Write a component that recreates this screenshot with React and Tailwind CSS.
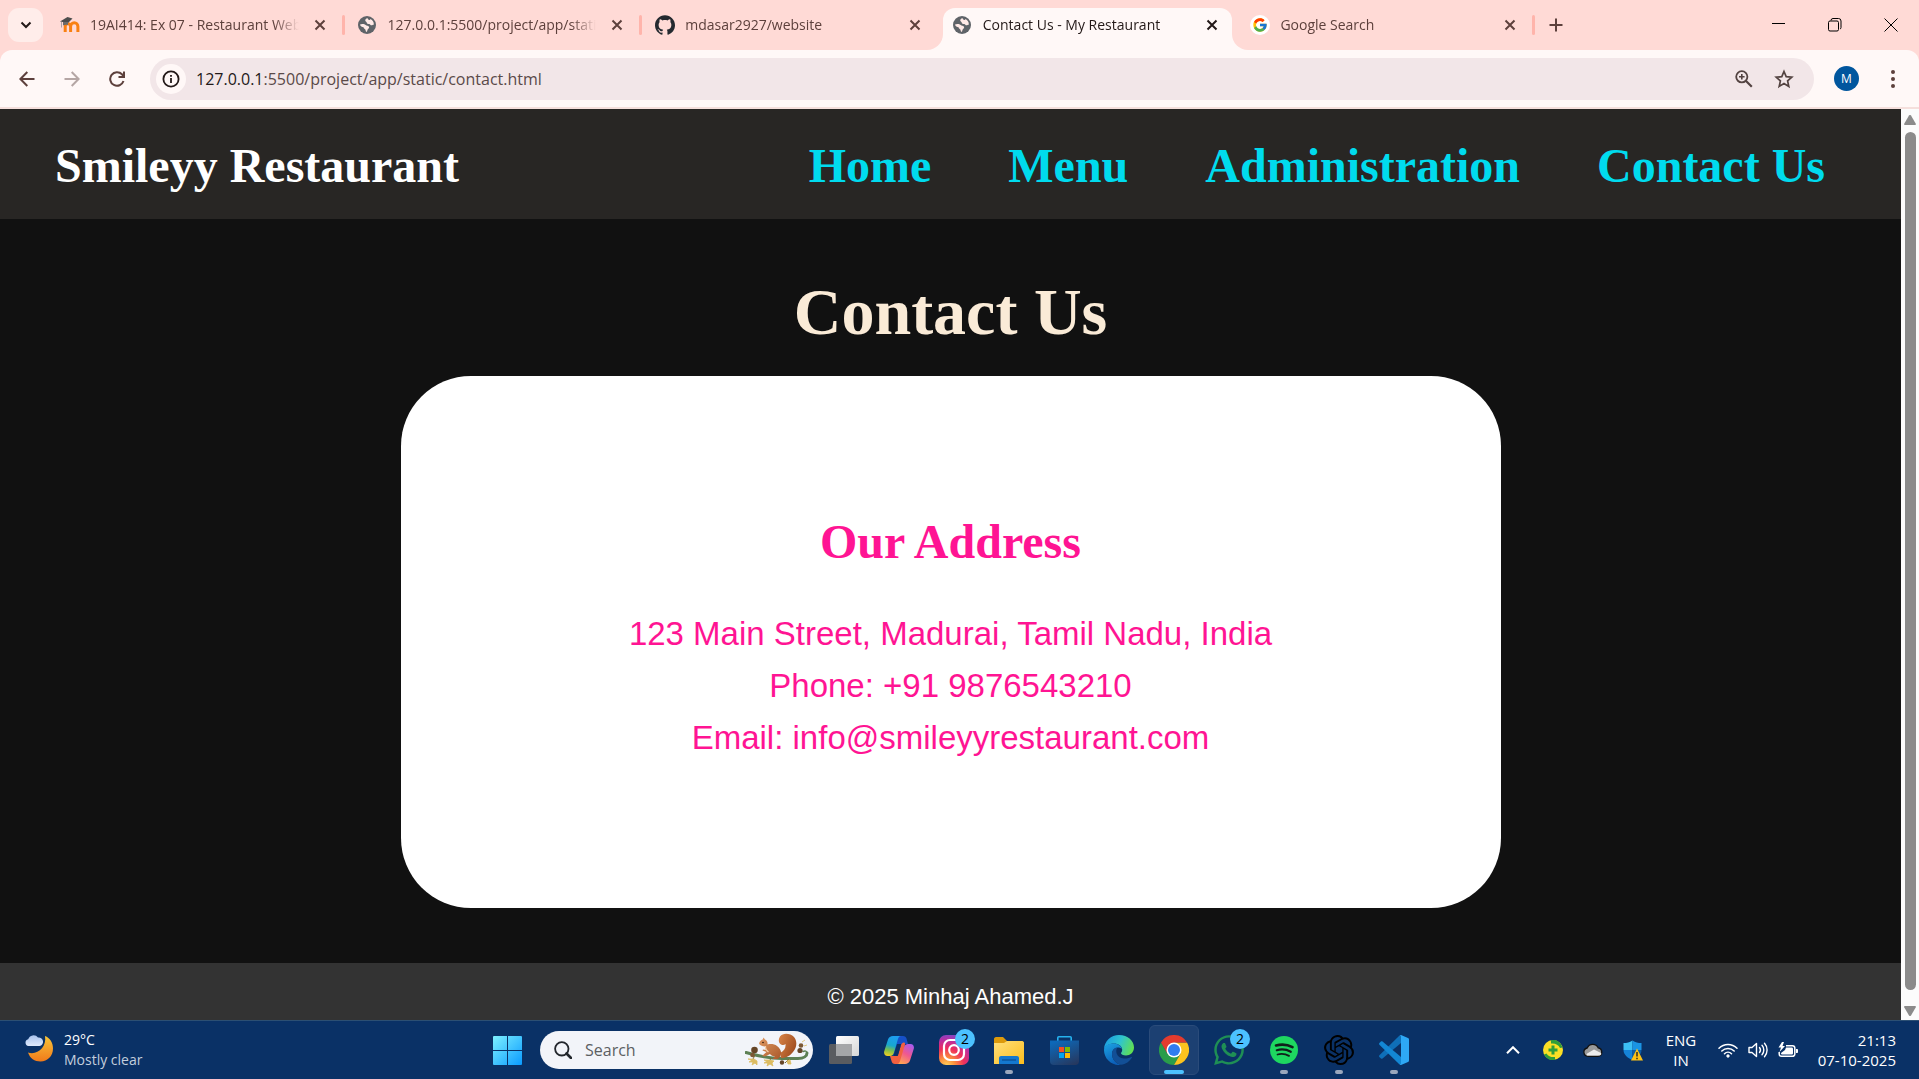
import { FcGoogle } from 'react-icons/fc';
import { SiGithub, SiOpenai } from 'react-icons/si';
import { FaWhatsapp } from 'react-icons/fa';

const CloseIcon = () => (
  <svg viewBox="0 0 12 12" className="size-3 fill-none stroke-current stroke-2">
    <path d="M1.5 1.5l9 9M10.5 1.5l-9 9" />
  </svg>
);

const GlobeIcon = () => (
  <svg viewBox="0 0 18 18" className="size-[18px]">
    <circle cx="9" cy="9" r="9" fill="#5f6368" />
    <path
      d="M9.500 2.200C7.800 2.500 7 3.500 7.300 4.700c.2 1 1.500 1 1.500 2 0 1.200 1.400 1 2.400 1.300 1 .3 1.300 1.300 2.300 1.300.9 0 1.300-.7 2.300-.6.300-2.600-1.300-4.700-3.300-5.700-.2.900-1 1.200-1.600.9-.5-.3-.7-1.200-1.400-1.700zM2 8.500c.9-.6 2.400-.7 3.700-.4 1.800.4 2.300 1.500 3.600 1.700 1.300.2 2 .9 1.800 2-.2 1-1.300 1.200-1.600 2.100-.3.900-.3 1.500-1 2-1-.2-.6-1.600-1.200-2.400-.6-.8-1.800-.9-1.700-2.200C4 11.200 2.400 10.500 2 8.500z"
      fill="#ffe9e6"
    />
  </svg>
);

const MoodleIcon = () => (
  <svg viewBox="0 0 20 18" className="h-[18px] w-5">
    <path
      d="M5.200 16V10.500a2.700 2.700 0 0 1 5.400 0V16m0-5.500a2.900 2.900 0 0 1 7.300 0V16"
      fill="none"
      stroke="#f98012"
      strokeWidth="3"
    />
    <path d="M0 5.500L7.500 1l5 1.500L8 7z" fill="#4d4d4d" />
    <path d="M3 6v3.500c1.500-1 3.500-1 5-.5V6z" fill="#6b6b6b" />
    <path d="M1.500 5.500v6" stroke="#8b8b8b" strokeWidth=".7" />
  </svg>
);

const GoogleIcon = () => (
  <span className="flex size-5 items-center justify-center rounded-full bg-white">
    <FcGoogle className="size-4" />
  </span>
);

const tabs = [
  { title: '19AI414: Ex 07 - Restaurant Website', icon: <MoodleIcon />, divider: true },
  { title: '127.0.0.1:5500/project/app/static/', icon: <GlobeIcon />, divider: true },
  { title: 'mdasar2927/website', icon: <SiGithub className="size-5 text-[#24292f]" /> },
  { title: 'Contact Us - My Restaurant', icon: <GlobeIcon />, active: true },
  { title: 'Google Search', icon: <GoogleIcon />, divider: true },
];

function Tab({ title, icon, active, divider }) {
  return (
    <div
      className={`relative flex h-full min-w-0 flex-1 items-center pr-3.5 pl-3.5 ${
        active ? 'text-[#231918]' : 'text-[#5d403c]'
      }`}
    >
      {active && (
        <>
          <span className="absolute inset-x-1 top-2 bottom-0 rounded-t-xl bg-[#fff8f7]" />
          <span className="absolute bottom-0 -left-3 size-4 overflow-hidden bg-[#fff8f7]">
            <span className="block size-full rounded-br-2xl bg-[#ffdad6]" />
          </span>
          <span className="absolute -right-3 bottom-0 size-4 overflow-hidden bg-[#fff8f7]">
            <span className="block size-full rounded-bl-2xl bg-[#ffdad6]" />
          </span>
        </>
      )}
      <button className="relative flex min-w-0 flex-1 items-center gap-2.5 text-left text-sm">
        <span className="flex w-5 shrink-0 items-center">{icon}</span>
        <span className="flex-1 overflow-hidden whitespace-nowrap [mask-image:linear-gradient(to_right,black_88%,transparent)]">
          {title}
        </span>
      </button>
      <button aria-label={`Close ${title}`} className="relative ml-[11px] flex size-5 items-center justify-center">
        <CloseIcon />
      </button>
      {divider && <span className="absolute -right-px h-5 w-[3px] rounded-full bg-[#ffb4ab]" />}
    </div>
  );
}

function TabStrip() {
  return (
    <div className="flex h-[50px] shrink-0 items-center bg-[#ffdad6] pl-2">
      <button
        aria-label="Search tabs"
        className="mr-[3px] flex h-[34px] w-[35px] items-center justify-center rounded-[11px] bg-[#ffedea] text-[#231918]"
      >
        <svg viewBox="0 0 12 8" className="h-2 w-3 fill-none stroke-current stroke-2">
          <path d="M1.500 1.500L6 6l4.500-4.500" />
        </svg>
      </button>
      <div className="flex h-full flex-1">
        {tabs.map((tab) => (
          <Tab key={tab.title} {...tab} />
        ))}
      </div>
      <div className="flex h-full w-[385px] items-center">
        <button aria-label="New tab" className="ml-2 flex size-7 items-center justify-center text-[#5d403c]">
          <svg viewBox="0 0 14 14" className="size-3.5 fill-none stroke-current stroke-2">
            <path d="M7 .5v13M.5 7h13" />
          </svg>
        </button>
        <div className="ml-auto flex h-full text-black">
          <button aria-label="Minimize" className="flex w-14 items-center justify-center">
            <svg viewBox="0 0 14 14" className="size-3.5 fill-none stroke-current">
              <path d="M0 5.500h13" />
            </svg>
          </button>
          <button aria-label="Restore" className="flex w-14 items-center justify-center">
            <svg viewBox="0 0 14 14" className="size-3.5 fill-none stroke-current">
              <rect x=".5" y="3" width="10" height="10" rx="1.500" />
              <path d="M3 2.500A2 2 0 0 1 5 .5h5.500A2.500 2.500 0 0 1 13 3v6.500a1.500 1.500 0 0 1-1 1.500" />
            </svg>
          </button>
          <button aria-label="Close window" className="flex w-14 items-center justify-center">
            <svg viewBox="0 0 14 14" className="size-3.5 fill-none stroke-current">
              <path d="M.5.5l13 13M13.500.5l-13 13" />
            </svg>
          </button>
        </div>
      </div>
    </div>
  );
}

function Toolbar() {
  return (
    <div className="shrink-0 bg-[#ffdad6]">
      <div className="flex h-[59px] items-center rounded-t-xl border-b-2 border-[#f5dfdc] bg-[#fff8f7] pl-[9px] text-[#534341]">
        <div className="flex gap-[9px]">
          <button aria-label="Back" className="flex size-9 items-center justify-center">
            <svg viewBox="0 0 16 16" className="size-4 fill-none stroke-[#5d403c] stroke-2">
              <path d="M15.500 8H1.500M8.300 1L1.400 8l6.900 7" />
            </svg>
          </button>
          <button aria-label="Forward" className="flex size-9 items-center justify-center">
            <svg viewBox="0 0 16 16" className="size-4 fill-none stroke-[#b5a6a4] stroke-2">
              <path d="M.5 8h14M7.700 1l6.900 7-6.900 7" />
            </svg>
          </button>
          <button aria-label="Reload" className="flex size-9 items-center justify-center">
            <svg viewBox="0 0 16 16" className="size-4 fill-none stroke-[#5d403c] stroke-2">
              <path d="M14.500 10A6.800 6.800 0 1 1 13 3.300L14.800 5.500M15 .5V6H9.500" />
            </svg>
          </button>
        </div>
        <div className="ml-[15px] flex h-[42px] flex-1 items-center rounded-full bg-[#f2e6e8] pr-5 pl-1.5">
          <button
            aria-label="View site information"
            className="flex size-[30px] items-center justify-center rounded-full bg-[#fff8f7]"
          >
            <svg viewBox="0 0 18 18" className="size-[18px] fill-none stroke-[#231918]">
              <circle cx="9" cy="9" r="7.600" strokeWidth="1.800" />
              <path d="M9 8v5M9 5v1.800" strokeWidth="1.800" />
            </svg>
          </button>
          <a href="#contact" className="ml-2.5 flex-1 text-base text-[#5a4a49]">
            <span className="text-[#231918]">127.0.0.1</span>:5500/project/app/static/contact.html
          </a>
          <button aria-label="Zoom" className="flex size-5 items-center justify-center">
            <svg viewBox="0 0 18 18" className="size-[18px] fill-none stroke-current">
              <circle cx="6.800" cy="6.800" r="5.600" strokeWidth="1.800" />
              <path d="M10.800 10.800l6 6" strokeWidth="2.200" />
              <path d="M6.800 4v5.600M4 6.800h5.600" strokeWidth="1.600" />
            </svg>
          </button>
          <button aria-label="Bookmark this tab" className="ml-5 flex size-5 items-center justify-center">
            <svg viewBox="0 0 20 20" className="size-5 fill-none stroke-current">
              <path
                d="M10 2.500l2.200 5.200 5.600.5-4.200 3.700 1.200 5.500L10 14.500l-4.800 2.900 1.200-5.500L2.200 8.200l5.600-.5z"
                strokeWidth="1.700"
              />
            </svg>
          </button>
        </div>
        <button
          aria-label="Profile"
          className="ml-5 flex size-[25px] items-center justify-center rounded-full bg-[#00569e] text-xs text-white"
        >
          M
        </button>
        <button aria-label="Menu" className="mr-3 ml-5 flex w-7 items-center justify-center">
          <svg viewBox="0 0 4 18" className="h-[18px] w-1 fill-[#5d403c]">
            <circle cx="2" cy="2" r="2" />
            <circle cx="2" cy="9" r="2" />
            <circle cx="2" cy="16" r="2" />
          </svg>
        </button>
      </div>
    </div>
  );
}

const links = ['Home', 'Menu', 'Administration', 'Contact Us'];

function RestaurantPage() {
  return (
    <div className="flex-1 bg-[#111111] font-['Liberation_Sans',Arial,sans-serif]">
      <header className="flex h-[110px] items-center justify-between bg-[#282624] pt-1 pr-[76px] pl-[55px] font-['Liberation_Serif','Times_New_Roman',serif] text-5xl font-bold">
        <p className="text-white">Smileyy Restaurant</p>
        <nav className="flex gap-[77px] text-[#00dbee]">
          {links.map((link) => (
            <a key={link} href="#contact">
              {link}
            </a>
          ))}
        </nav>
      </header>
      <main id="contact" className="flex flex-col items-center pt-[55px] pb-[55px]">
        <h1 className="font-['Liberation_Serif','Times_New_Roman',serif] text-[66px] leading-[76px] font-bold text-[#faebd7]">
          Contact Us
        </h1>
        <section className="mt-[26px] w-full max-w-[1100px] rounded-[70px] bg-white pt-[138px] pb-36 text-center text-[#ff1493]">
          <h2 className="font-['Liberation_Serif','Times_New_Roman',serif] text-5xl leading-14 font-bold">
            Our Address
          </h2>
          <address className="mt-[38px] text-[33px] leading-[52px] not-italic">
            <p>123 Main Street, Madurai, Tamil Nadu, India</p>
            <p>Phone: +91 9876543210</p>
            <p>Email: info@smileyyrestaurant.com</p>
          </address>
        </section>
      </main>
      <footer className="bg-[#333333] pt-5 pb-8 text-center text-[22px] leading-7 text-white">
        © 2025 Minhaj Ahamed.J
      </footer>
    </div>
  );
}

function Scrollbar() {
  return (
    <div className="flex w-[18px] flex-col items-center bg-[#fcfcfc]">
      <svg viewBox="0 0 12 10" className="mt-1.5 h-2.5 w-3 fill-[#8b8b8b]">
        <path d="M5 .6a1.200 1.200 0 0 1 2 0l4.800 8.200c.3.600 0 1.200-.7 1.200H.9c-.7 0-1-.6-.7-1.200z" />
      </svg>
      <div className="mt-[7px] w-[11px] flex-1 rounded-full bg-[#8b8b8b]" />
      <svg viewBox="0 0 12 10" className="mt-4 mb-1 h-2.5 w-3 fill-[#8b8b8b]">
        <path d="M5 9.400a1.200 1.200 0 0 0 2 0l4.800-8.200c.3-.6 0-1.200-.7-1.200H.9C.2 0-.1.600.2 1.200z" />
      </svg>
    </div>
  );
}

const WindowsIcon = () => (
  <svg viewBox="0 0 29 29" className="size-[29px]">
    <defs>
      <linearGradient id="win" x1="0" y1="0" x2="1" y2="1" gradientUnits="objectBoundingBox">
        <stop offset="0" stopColor="#7df0ff" />
        <stop offset="1" stopColor="#0a9bff" />
      </linearGradient>
    </defs>
    <path
      d="M1 0h13v14H0V1a1 1 0 0 1 1-1zM15 0h13a1 1 0 0 1 1 1v13H15zM0 15h14v14H1a1 1 0 0 1-1-1zM15 15h14v13a1 1 0 0 1-1 1H15z"
      fill="url(#win)"
    />
  </svg>
);

const Squirrel = () => (
  <svg viewBox="0 0 64 34" className="h-[34px] w-16">
    <defs>
      <linearGradient id="fur" x1="0" y1="0" x2="1" y2="1">
        <stop offset="0" stopColor="#e09a62" />
        <stop offset="1" stopColor="#a9582a" />
      </linearGradient>
      <linearGradient id="tail" x1="0" y1="0" x2="1" y2=".6">
        <stop offset="0" stopColor="#d98548" />
        <stop offset="1" stopColor="#a04d1f" />
      </linearGradient>
    </defs>
    <path d="M1 19.500c12 3.500 24 6 36 6h16c6 0 9-2.500 9-5.500" fill="none" stroke="#5d8054" strokeWidth="3" strokeLinecap="round" />
    <path d="M62 20c0-2-2-2.500-4-1.500" fill="none" stroke="#5d8054" strokeWidth="1.500" strokeLinecap="round" />
    <path d="M10 22l-3 6M26 25l-3 6M44 26l-4 4" stroke="#7b6a35" strokeWidth="1" />
    <path
      d="M3 26l4 1-3 2 4 0-1 3 3-2 2 2 0-4-3-2zM19 27l3 1-3 2 4 0-1 3 3-2 3 2-1-3 2-2-5-1zM42 28l3-1 1 4-3 0zM57 9l3-2M59 13l3-1"
      fill="#dcbc62"
      stroke="#dcbc62"
      strokeWidth=".8"
    />
    <circle cx="9.500" cy="17" r="3.300" fill="#654527" />
    <circle cx="7.500" cy="22" r="2.300" fill="#7b5833" />
    <circle cx="56" cy="12.500" r="2.300" fill="#7b5833" />
    <circle cx="55" cy="17.500" r="2.600" fill="#654527" />
    <circle cx="37" cy="29.500" r="2.200" fill="#654527" />
    <path
      d="M36 25c6 0 9-2.500 12-6 4-4.500 4.500-11 1-15C45 0 38-.5 35 3.500c-2 3-1.500 6.500 1 8 2 1 3.500.5 4.500-.5.5 4-1.500 7-5.500 9z"
      fill="url(#tail)"
    />
    <path
      d="M14 10.500c.5-2 2-3.500 3.700-4L18.500 4.500l1.500 2c2 1 2.800 2.800 2.500 5 3-.8 7-.5 9.500 1.500 3.500 2.500 5 6 3.500 9.500-.5 1.500-1.500 2.500-3 3.500h-5l2.500-2.500c-2 0-4-1-5-2.500L20 23.500l-3-.5 4.500-4-4-1.500.5-1 3.500.5c-1-1-1.500-2-1.500-3.500-2.500-.2-5-.8-6-3z"
      fill="url(#fur)"
    />
    <path d="M20.500 13c-.2 2.500.8 4.500 3 6" fill="none" stroke="#f3d0aa" strokeWidth="1.200" />
    <circle cx="18" cy="9.500" r=".8" fill="#2b1608" />
  </svg>
);

const TaskViewIcon = () => (
  <svg viewBox="0 0 30 28" className="h-7 w-[30px]">
    <defs>
      <linearGradient id="tv" x1="0" y1="0" x2="1" y2="1">
        <stop offset="0" stopColor="#fff" />
        <stop offset="1" stopColor="#d6d6d6" />
      </linearGradient>
    </defs>
    <rect y="8" width="23" height="20" rx="1.500" fill="#5a5c60" />
    <rect x="7" width="23" height="20" rx="1.500" fill="url(#tv)" />
    <path d="M7 8h16v12H7z" fill="#a5a6a8" />
  </svg>
);

const CopilotIcon = () => (
  <svg viewBox="0 0 30 28" className="h-7 w-[30px]">
    <defs>
      <linearGradient id="cpA" x1=".4" y1="0" x2=".2" y2="1">
        <stop offset="0" stopColor="#1d9df0" />
        <stop offset=".45" stopColor="#18a7cf" />
        <stop offset=".7" stopColor="#7cbf4b" />
        <stop offset="1" stopColor="#f4d020" />
      </linearGradient>
      <linearGradient id="cpB" x1=".8" y1="0" x2=".3" y2="1">
        <stop offset="0" stopColor="#a85bf0" />
        <stop offset=".5" stopColor="#f0588f" />
        <stop offset="1" stopColor="#ffa454" />
      </linearGradient>
    </defs>
    <path d="M10 0h9c2 0 3 1 3.500 2.500L24 8h-4c-2 0-3 1-4 4l-3 11c-1 3-2 4-4 3z" fill="#1650c8" />
    <path d="M20 28h-9c-2 0-3-1-3.500-3L6 20h5c2 0 3-1 3.700-3.500L17 9c1-2 2-3 4-2z" fill="#f2603f" />
    <path d="M9 0h8c-1.500 0-2.500 1-3.200 3.500L10 16.500C9.300 19 8 20 6 20H3.500C.7 20-.5 17.500.3 15L4 3.500C4.800 1.200 6.500 0 9 0z" fill="url(#cpA)" />
    <path d="M21 28h-8c1.500 0 2.500-1 3.200-3.500L20 11.500C20.700 9 22 8 24 8h2.500c2.800 0 4 2.500 3.200 5L26 24.500C25.200 26.800 23.500 28 21 28z" fill="url(#cpB)" />
    <path d="M13 8h4.200L14 19.500c-.3.500-.6.500-1 .5H9.300z" fill="#0a3166" />
  </svg>
);

const InstagramIcon = () => (
  <svg viewBox="0 0 30 30" className="size-[30px]">
    <defs>
      <radialGradient id="ig" cx=".25" cy="1.050" r="1.200">
        <stop offset="0" stopColor="#ffd95e" />
        <stop offset=".25" stopColor="#fb8d3c" />
        <stop offset=".5" stopColor="#ee2f5b" />
        <stop offset=".75" stopColor="#b72fa5" />
        <stop offset="1" stopColor="#5a55d6" />
      </radialGradient>
    </defs>
    <rect width="30" height="30" rx="7" fill="url(#ig)" />
    <g fill="none" stroke="#fff" strokeWidth="2.200">
      <rect x="5" y="5" width="20" height="20" rx="6" />
      <circle cx="15" cy="15" r="4.800" />
    </g>
    <circle cx="21" cy="9" r="1.300" fill="#fff" />
  </svg>
);

const FolderIcon = () => (
  <svg viewBox="0 0 30 27" className="h-[27px] w-[30px]">
    <defs>
      <linearGradient id="fold" x1="0" y1="0" x2="1" y2="1">
        <stop offset="0" stopColor="#ffe07c" />
        <stop offset="1" stopColor="#fbbd1d" />
      </linearGradient>
    </defs>
    <path d="M0 2C0 1 .8 0 2 0h7l4 4h15c1 0 2 1 2 2v8H0z" fill="#dc9a0c" />
    <path d="M0 6h10l3-2h15c1 0 2 1 2 2v21H0z" fill="url(#fold)" />
    <path d="M5 27v-6c0-1.200 1-2 2-2h16c1 0 2 .8 2 2v6z" fill="#1478cf" />
    <path d="M8 23h14" stroke="#0b559c" strokeWidth="1.500" />
  </svg>
);

const StoreIcon = () => (
  <svg viewBox="0 0 29 29" className="size-[29px]">
    <defs>
      <linearGradient id="store" x1=".3" y1="0" x2=".8" y2="1">
        <stop offset="0" stopColor="#0d68b8" />
        <stop offset="1" stopColor="#26385f" />
      </linearGradient>
    </defs>
    <path d="M7.800 6V1.800c0-.6.400-1 1-1h11.400c.6 0 1 .4 1 1V6" fill="none" stroke="#25b1ee" strokeWidth="1.600" />
    <path d="M0 4.500h29V25a4 4 0 0 1-4 4H4a4 4 0 0 1-4-4z" fill="url(#store)" />
    <path d="M9 11h5v5H9z" fill="#f25022" />
    <path d="M15 11h5v5h-5z" fill="#7fba00" />
    <path d="M9 17h5v5H9z" fill="#00a4ef" />
    <path d="M15 17h5v5h-5z" fill="#ffb900" />
  </svg>
);

const EdgeIcon = () => (
  <svg viewBox="0 0 30 30" className="size-[30px]">
    <defs>
      <linearGradient id="edgeTop" x1="0" y1=".3" x2="1" y2=".6">
        <stop offset="0" stopColor="#1b9de2" />
        <stop offset=".5" stopColor="#2fc4cf" />
        <stop offset="1" stopColor="#62e04f" />
      </linearGradient>
      <linearGradient id="edgeLeft" x1="0" y1="0" x2=".4" y2="1">
        <stop offset="0" stopColor="#1ca4e4" />
        <stop offset="1" stopColor="#0c5fb8" />
      </linearGradient>
    </defs>
    <path d="M0 14C.5 6 7 0 15 0c9 0 15 6 15 12.500 0 5-4 8-8 8-3 0-5-1-5-2.200 0-1 1.200-1.300 1.200-3.600C18.200 11 14 8.500 10 8.500 5 8.500 1 11 0 14z" fill="url(#edgeTop)" />
    <path d="M0 15c0-4 4-6.500 9.500-6.500 4.500 0 8 2.500 8.500 5.500-1-1-2.500-1.500-4-1.500-4 0-6 3-6 6.500 0 5 4 10 9 10.800C8 31 0 24 0 15z" fill="url(#edgeLeft)" />
    <path d="M8 19c0-3.500 2.300-6.300 5.500-6.500C11 15 12 23 20 23.500c3 .2 5.500-.6 7.500-1.500.4-.2.700.2.500.6C26 26 21.500 29.800 17 29.800 12 29 8 24 8 19z" fill="#124f96" />
  </svg>
);

const ChromeIcon = () => (
  <svg viewBox="0 0 30 30" className="size-[30px]">
    <path d="M2 7.500A15 15 0 0 0 15 30l6.500-11.200L15 15 8.500 18.800z" fill="#2a9d4a" />
    <path d="M28 7.500A15 15 0 0 1 15 30l6.500-11.200L15 7.500z" fill="#fcc31e" />
    <path d="M15 7.500h13A15 15 0 0 0 2 7.500l6.500 11.300z" fill="#e33b2e" />
    <circle cx="15" cy="15" r="7.500" fill="#fff" />
    <circle cx="15" cy="15" r="6" fill="#2f7cf0" />
  </svg>
);

const SpotifyIcon = () => (
  <svg viewBox="0 0 28 28" className="size-7">
    <circle cx="14" cy="14" r="14" fill="#1ed760" />
    <g fill="none" stroke="#101f1a" strokeLinecap="round">
      <path d="M6 9.500c5.500-1.500 11.500-1 16.500 1.700" strokeWidth="2.600" />
      <path d="M6.800 14.200c4.800-1.300 9.700-.8 14 1.600" strokeWidth="2.200" />
      <path d="M7.500 18.500c4-1 8-.6 11.500 1.400" strokeWidth="1.800" />
    </g>
  </svg>
);

const VSCodeIcon = () => (
  <svg viewBox="0 0 30 30" className="size-[30px]">
    <path d="M22 0v8L3.500 23.500c-.5.400-1 .4-1.500 0L.4 22c-.5-.5-.5-1.200 0-1.700L20 1z" fill="#0f6fb8" />
    <path d="M22 30v-8L3.500 6.500c-.5-.4-1-.4-1.500 0L.4 8c-.5.500-.5 1.200 0 1.700L20 29z" fill="#1387d4" />
    <path d="M22 0l7 3c.6.300 1 .8 1 1.500v21c0 .7-.4 1.200-1 1.500l-7 3c-.8 0-1.500-.3-2-1 .9.800 2 .3 2-1V2c0-1.300-1.100-1.800-2-1 .5-.7 1.200-1 2-1z" fill="#2ea8f5" />
  </svg>
);

const apps = [
  { name: 'Task view', icon: <TaskViewIcon /> },
  { name: 'Copilot', icon: <CopilotIcon /> },
  { name: 'Instagram', icon: <InstagramIcon />, badge: 2 },
  { name: 'File Explorer', icon: <FolderIcon />, running: true },
  { name: 'Microsoft Store', icon: <StoreIcon /> },
  { name: 'Edge', icon: <EdgeIcon /> },
  { name: 'Chrome', icon: <ChromeIcon />, active: true },
  { name: 'WhatsApp', icon: <FaWhatsapp className="size-[34px] text-[#1f8f55]" />, badge: 2 },
  { name: 'Spotify', icon: <SpotifyIcon />, running: true },
  { name: 'ChatGPT', icon: <SiOpenai className="size-[30px] text-black" />, running: true },
  { name: 'Visual Studio Code', icon: <VSCodeIcon />, running: true },
];

function TaskButton({ name, icon, badge, running, active }) {
  return (
    <button
      aria-label={name}
      className={`relative flex size-[50px] items-center justify-center rounded-md border ${
        active ? 'border-[#2a4b7a] bg-[#1c4072]' : 'border-transparent'
      }`}
    >
      {icon}
      {badge && (
        <span className="absolute top-[3px] right-[3px] flex size-5 items-center justify-center rounded-full bg-[#4cc2ff] text-sm leading-5 text-black">
          {badge}
        </span>
      )}
      {running && <span className="absolute bottom-0 h-1 w-2 rounded-full bg-[#9aa7bd]" />}
      {active && <span className="absolute bottom-0 h-1 w-5 rounded-full bg-[#4cc2ff]" />}
    </button>
  );
}

function Tray() {
  return (
    <div className="ml-auto flex items-center pr-[23px] text-white">
      <button aria-label="Show hidden icons" className="flex w-10 justify-center">
        <svg viewBox="0 0 14 8" className="h-2 w-3.5 fill-none stroke-current stroke-2">
          <path d="M1 7.200l6-6 6 6" />
        </svg>
      </button>
      <button aria-label="Download manager" className="flex w-10 justify-center">
        <svg viewBox="0 0 20 20" className="size-5">
          <circle cx="10" cy="10" r="10" fill="#fbdf25" />
          <path d="M8 0a10 10 0 0 1 11.500 7.500L17 8c-1.500-3.500-5-5-9-4.500zM12 20A10 10 0 0 1 1 14.500l2.500-1c2 3 5 4 8.500 3.500z" fill="#2f9e3a" />
          <path d="M8.500 5.500h3v3h3v3h-3v3h-3v-3h-3v-3h3z" fill="#2f9e3a" />
        </svg>
      </button>
      <button aria-label="OneDrive" className="flex w-10 justify-center">
        <svg viewBox="0 0 20 14" className="h-3.5 w-5">
          <path d="M5 13.300a4.200 4.200 0 0 1-.8-8.300 6 6 0 0 1 11-.2 4.300 4.300 0 0 1-.2 8.500z" fill="#9a9a9a" stroke="#111" strokeWidth="1.300" />
          <path d="M4 12.500c-1-1 0-2 1-2.500l6-3.500 7 3.500c1 1.500-.5 2.600-2.500 2.600H5z" fill="#ececec" />
        </svg>
      </button>
      <button aria-label="Windows Security" className="flex w-10 justify-center">
        <svg viewBox="0 0 20 21" className="h-[21px] w-5">
          <path d="M9.500.5V10H.5V3c3.500 0 6-.5 9-2.500z" fill="#3cc0f5" />
          <path d="M9.500 10v10c-5-2-9-5.500-9-10z" fill="#1583d8" />
          <path d="M18.500 3v7h-9V.5c3 2 5.500 2.500 9 2.500z" fill="#1a94e4" />
          <path d="M9.500 10h9c0 4.500-4 8-9 10z" fill="#0d5ea8" />
          <path d="M14 8.500L20 20.500H8z" fill="#fcc216" />
          <path d="M14 12v4.500M14 17.700v1.500" stroke="#222" strokeWidth="1.400" />
        </svg>
      </button>
      <button aria-label="Language" className="w-14 text-center text-[15px] leading-5">
        ENG
        <br />
        IN
      </button>
      <button aria-label="Network, volume and battery" className="ml-1 flex w-[90px] items-center justify-around">
        <svg viewBox="0 0 20 16" className="h-4 w-5 fill-none stroke-current">
          <path d="M1 6.200a12.700 12.700 0 0 1 18 0M3.800 9a8.800 8.800 0 0 1 12.400 0M6.500 11.700a5 5 0 0 1 7 0" strokeWidth="1.500" strokeLinecap="round" />
          <circle cx="10" cy="14" r="1.200" className="fill-current" />
        </svg>
        <svg viewBox="0 0 20 16" className="h-4 w-5 fill-none stroke-current" strokeWidth="1.400" strokeLinecap="round" strokeLinejoin="round">
          <path d="M1 5.500h3L8.500 1.500v13L4 10.500H1zM11.500 5.500a4 4 0 0 1 0 5M14 3.300a7 7 0 0 1 0 9.400M16.500 1.300a10 10 0 0 1 0 13.400" />
        </svg>
        <svg viewBox="0 0 20 16" className="h-4 w-5">
          <path d="M8 3.700h6.500a2.300 2.300 0 0 1 2.300 2.300v6a2.300 2.300 0 0 1-2.300 2.300h-11A2.300 2.300 0 0 1 1.200 12v-2" fill="none" stroke="#fff" strokeWidth="1.500" />
          <path d="M8 5.500h5.500c1 0 1.500.5 1.500 1.500v4c0 1-.5 1.500-1.500 1.500h-9c-1 0-1.500-.5-1.500-1.500L7 8zM18 7h1c.6 0 1 .5 1 1v2c0 .6-.4 1-1 1h-1zM4 0L.5 5.500H3L1.500 10 7 4H4.500L6 0z" fill="#fff" />
        </svg>
      </button>
      <button aria-label="Clock" className="w-[93px] text-right text-[15px] leading-5">
        21:13
        <br />
        07-10-2025
      </button>
    </div>
  );
}

function Taskbar() {
  return (
    <div className="flex h-[59px] shrink-0 items-center border-t border-[#2c4f73] bg-[#0a3166]">
      <div className="w-[482px] pl-[25px]">
        <button className="flex items-center gap-[11px] text-left text-sm leading-5">
          <svg viewBox="0 0 28 28" className="mb-1 size-7">
            <defs>
              <linearGradient id="moon" x1=".5" y1="0" x2=".5" y2="1">
                <stop offset="0" stopColor="#f7c53a" />
                <stop offset="1" stopColor="#f07a1a" />
              </linearGradient>
              <linearGradient id="cloud" x1=".5" y1="0" x2=".5" y2="1">
                <stop offset="0" stopColor="#a9c3ee" />
                <stop offset="1" stopColor="#dfeafd" />
              </linearGradient>
            </defs>
            <path d="M20 2c5 2 8 6.500 8 12.500C28 22 22.500 27.500 15.500 27.500c-6 0-10.500-3-12.500-9 9 3 19-5 17-16.500z" fill="url(#moon)" />
            <path d="M3.500 12a3.400 3.400 0 0 1-.3-6.700A5.600 5.600 0 0 1 13 3.500a4.300 4.300 0 0 1 1.500 8.500z" fill="url(#cloud)" />
          </svg>
          <span>
            <span className="block text-white">29°C</span>
            <span className="block text-[#c3cedd]">Mostly clear</span>
          </span>
        </button>
      </div>
      <button aria-label="Start" className="flex size-[50px] items-center justify-center">
        <WindowsIcon />
      </button>
      <label className="ml-2 flex h-[38px] w-[273px] items-center rounded-full bg-[#f2f4f9] pr-1 pl-3.5">
        <svg viewBox="0 0 18 18" className="size-[18px] shrink-0 fill-none stroke-[#22262c]">
          <circle cx="7.800" cy="7.800" r="6.700" strokeWidth="1.800" />
          <path d="M12.500 12.500l4.500 4.500" strokeWidth="2.600" strokeLinecap="round" />
        </svg>
        <input
          type="text"
          aria-label="Search"
          placeholder="Search"
          className="ml-[13px] min-w-0 flex-1 bg-transparent text-base text-[#5c5f63] outline-none placeholder:text-[#5c5f63]"
        />
        <Squirrel />
      </label>
      <div className="ml-1.5 flex gap-[5px]">
        {apps.map((app) => (
          <TaskButton key={app.name} {...app} />
        ))}
      </div>
      <Tray />
    </div>
  );
}

export default function App() {
  return (
    <div className="flex h-screen flex-col overflow-hidden font-['Open_Sans','Noto_Sans',sans-serif]">
      <TabStrip />
      <Toolbar />
      <div className="flex min-h-0 flex-1 overflow-hidden">
        <RestaurantPage />
        <Scrollbar />
      </div>
      <Taskbar />
    </div>
  );
}
